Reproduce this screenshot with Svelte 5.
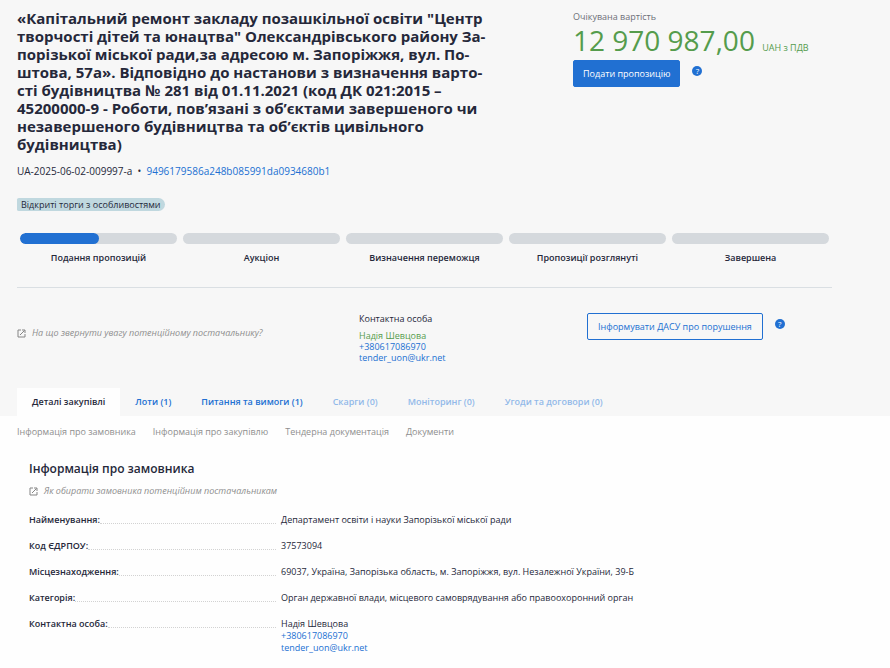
<script>
    const stages = [
        { label: 'Подання пропозицій', progress: 50 },
        { label: 'Аукціон', progress: 0 },
        { label: 'Визначення переможця', progress: 0 },
        { label: 'Пропозиції розглянуті', progress: 0 },
        { label: 'Завершена', progress: 0 }
    ];

    const tabs = [
        { label: 'Деталі закупівлі', enabled: true },
        { label: 'Лоти (1)', enabled: true },
        { label: 'Питання та вимоги (1)', enabled: true },
        { label: 'Скарги (0)', enabled: false },
        { label: 'Моніторинг (0)', enabled: false },
        { label: 'Угоди та договори (0)', enabled: false }
    ];

    const sections = [
        'Інформація про замовника',
        'Інформація про закупівлю',
        'Тендерна документація',
        'Документи'
    ];

    const customer = [
        { label: 'Найменування:', value: 'Департамент освіти і науки Запорізької міської ради' },
        { label: 'Код ЄДРПОУ:', value: '37573094' },
        { label: 'Місцезнаходження:', value: '69037, Україна, Запорізька область, м. Запоріжжя, вул. Незалежної України, 39-Б' },
        { label: 'Категорія:', value: 'Орган державної влади, місцевого самоврядування або правоохоронний орган' }
    ];

    const contact = {
        name: 'Надія Шевцова',
        phone: '+380617086970',
        email: 'tender_uon@ukr.net'
    };

    let activeTab = $state(0);
</script>

{#snippet openIcon()}
    <svg class="open-icon" viewBox="0 0 18 18" aria-hidden="true">
        <path d="M8 2H2v14h14V10" />
        <path d="M6 12 15 3" />
        <path d="M10 2h6v6" />
    </svg>
{/snippet}

{#snippet help(label)}
    <button class="help" type="button" aria-label={label}>?</button>
{/snippet}

<header class="head">
    <div class="wrap">
        <div class="top">
            <div class="summary">
                <h1>«Капітальний ремонт закладу позашкільної освіти "Центр творчості дітей та юнацтва" Олександрівського району За&shy;порізької міської ради,за адресою м. Запоріжжя, вул. По&shy;штова, 57а». Відповідно до настанови з визначення варто&shy;сті будівництва № 281 від 01.11.2021 (код ДК 021:2015 – 45200000-9 - Роботи, пов’язані з об’єктами завершеного чи незавершеного будівництва та об’єктів цивільного будівництва)</h1>
                <p class="ids">UA-2025-06-02-009997-a&nbsp; •&nbsp; <a href="#id">9496179586a248b085991da0934680b1</a></p>
                <span class="tag">Відкриті торги з особливостями</span>
            </div>
            <div class="price">
                <p class="price-label">Очікувана вартість</p>
                <p class="amount">12 970 987,00 <small>UAH з ПДВ</small></p>
                <div class="action">
                    <button class="btn primary" type="button">Подати пропозицію</button>
                    {@render help('Довідка про подання пропозиції')}
                </div>
            </div>
        </div>

        <ol class="stages">
            {#each stages as stage}
                <li>
                    <div class="bar">
                        {#if stage.progress}
                            <div class="fill" style="width:{stage.progress}%"></div>
                        {/if}
                    </div>
                    {stage.label}
                </li>
            {/each}
        </ol>

        <div class="info">
            <a class="advice" href="#advice">{@render openIcon()}На що звернути увагу потенційному постачальнику?</a>
            <div class="contact">
                <p class="contact-title">Контактна особа</p>
                <p class="name">{contact.name}</p>
                <a href="tel:{contact.phone}">{contact.phone}</a>
                <a href="mailto:{contact.email}">{contact.email}</a>
            </div>
            <div class="action">
                <button class="btn outline" type="button">Інформувати ДАСУ про порушення</button>
                {@render help('Довідка про порушення')}
            </div>
        </div>

        <nav class="tabs">
            {#each tabs as tab, i}
                <button type="button" class:active={activeTab === i} disabled={!tab.enabled} onclick={() => (activeTab = i)}>{tab.label}</button>
            {/each}
        </nav>
    </div>
</header>

<main class="wrap">
    <nav class="sections">
        {#each sections as section}
            <a href="#section">{section}</a>
        {/each}
    </nav>

    <section class="customer">
        <h2>Інформація про замовника</h2>
        <a class="advice" href="#choose">{@render openIcon()}Як обирати замовника потенційним постачальникам</a>
        <dl>
            {#each customer as row}
                <div class="row">
                    <dt>{row.label}</dt>
                    <dd>{row.value}</dd>
                </div>
            {/each}
            <div class="row">
                <dt>Контактна особа:</dt>
                <dd>
                    {contact.name}
                    <a href="tel:{contact.phone}">{contact.phone}</a>
                    <a href="mailto:{contact.email}">{contact.email}</a>
                </dd>
            </div>
        </dl>
    </section>
</main>

<style>
    :global(body) {
        margin: 0;
        background: #fefefe;
        color: #25283a;
        font-family: "Open Sans", "Noto Sans", sans-serif;
        font-size: 9px;
        line-height: 12px;
    }

    h1, h2, p, dl, dd, ol {
        margin: 0;
        padding: 0;
    }

    a {
        color: #2170d2;
        text-decoration: none;
    }

    button {
        font: inherit;
        cursor: pointer;
    }

    .wrap {
        padding: 0 58px 0 17px;
    }

    .head {
        background: #f7f7f7;
    }

    .top {
        display: grid;
        grid-template-columns: 556px 1fr;
        padding-top: 9px;
    }

    .summary {
        padding-right: 83px;
    }

    h1 {
        font-size: 15px;
        line-height: 18px;
        font-weight: 700;
    }

    .ids {
        margin-top: 10px;
        font-size: 10px;
        line-height: 16px;
    }

    .tag {
        display: inline-block;
        margin-top: 19px;
        padding: 0 4px;
        background: #c0d8df;
        border-radius: 2px 7px 7px 2px;
        line-height: 13px;
    }

    .price {
        padding-top: 1px;
    }

    .price-label {
        color: #6d6f78;
        line-height: 14px;
    }

    .amount {
        margin-bottom: 4px;
        color: #559c4c;
        font-size: 28px;
        line-height: 32px;
    }

    .amount small {
        font-size: 9px;
        line-height: 12px;
    }

    .action {
        display: flex;
        align-items: flex-start;
        gap: 12px;
    }

    .btn {
        height: 27px;
        padding: 0 10px;
        border: 1px solid #2170d2;
        border-radius: 2px;
    }

    .primary {
        padding: 0 9px;
        background: #2170d2;
        color: #fff;
        font-weight: 500;
    }

    .outline {
        background: transparent;
        color: #2170d2;
    }

    .help {
        width: 10px;
        height: 10px;
        margin-top: 6px;
        padding: 0;
        border: 0;
        border-radius: 50%;
        background: #2170d2;
        color: #fff;
        font-size: 8px;
        line-height: 10px;
    }

    .stages {
        display: grid;
        grid-template-columns: repeat(5, 1fr);
        padding: 22px 0 23px;
        border-bottom: 1px solid #dadfe3;
        list-style: none;
        text-align: center;
        font-weight: 600;
    }

    .stages li {
        padding: 0 3px;
    }

    .bar {
        height: 11px;
        margin-bottom: 8px;
        border-radius: 6px;
        background: #d5d9dd;
        overflow: hidden;
    }

    .fill {
        height: 100%;
        border-radius: 6px;
        background: #2170d2;
    }

    .info {
        display: grid;
        grid-template-columns: 342px 228px 1fr;
        padding: 25px 0;
    }

    .info .advice {
        margin-top: 14px;
    }

    .advice {
        display: flex;
        align-items: center;
        gap: 6px;
        height: 12px;
        color: #8e8e8e;
        font-style: italic;
    }

    .open-icon {
        width: 9px;
        height: 9px;
        fill: none;
        stroke: #858585;
        stroke-width: 2;
    }

    .contact {
        line-height: 11px;
    }

    .contact-title {
        margin-bottom: 6px;
        font-weight: 500;
    }

    .name {
        color: #559c4c;
    }

    .contact a, dd a {
        display: block;
    }

    .tabs {
        display: flex;
    }

    .tabs button {
        height: 28px;
        padding: 0 15px;
        border: 0;
        background: transparent;
        color: #2170d2;
        font-weight: 600;
    }

    .tabs button:disabled {
        color: #92b9e9;
        cursor: default;
    }

    .tabs .active {
        background: #fefefe;
        color: #25283a;
    }

    .sections {
        display: flex;
        gap: 17px;
        padding-top: 10px;
    }

    .sections a {
        color: #8e8e8e;
    }

    .customer {
        padding: 23px 12px 13px;
    }

    h2 {
        font-size: 12px;
        line-height: 16px;
        font-weight: 600;
    }

    .customer .advice {
        margin-top: 8px;
    }

    dl {
        display: grid;
        gap: 14px;
        margin-top: 17px;
    }

    .row {
        display: grid;
        grid-template-columns: 247px 1fr;
        column-gap: 5px;
    }

    dt {
        display: flex;
        align-items: flex-start;
        font-weight: 600;
    }

    dt::after {
        content: "";
        flex: 1;
        height: 9px;
        border-bottom: 1px dotted #d2d2d2;
    }
</style>
